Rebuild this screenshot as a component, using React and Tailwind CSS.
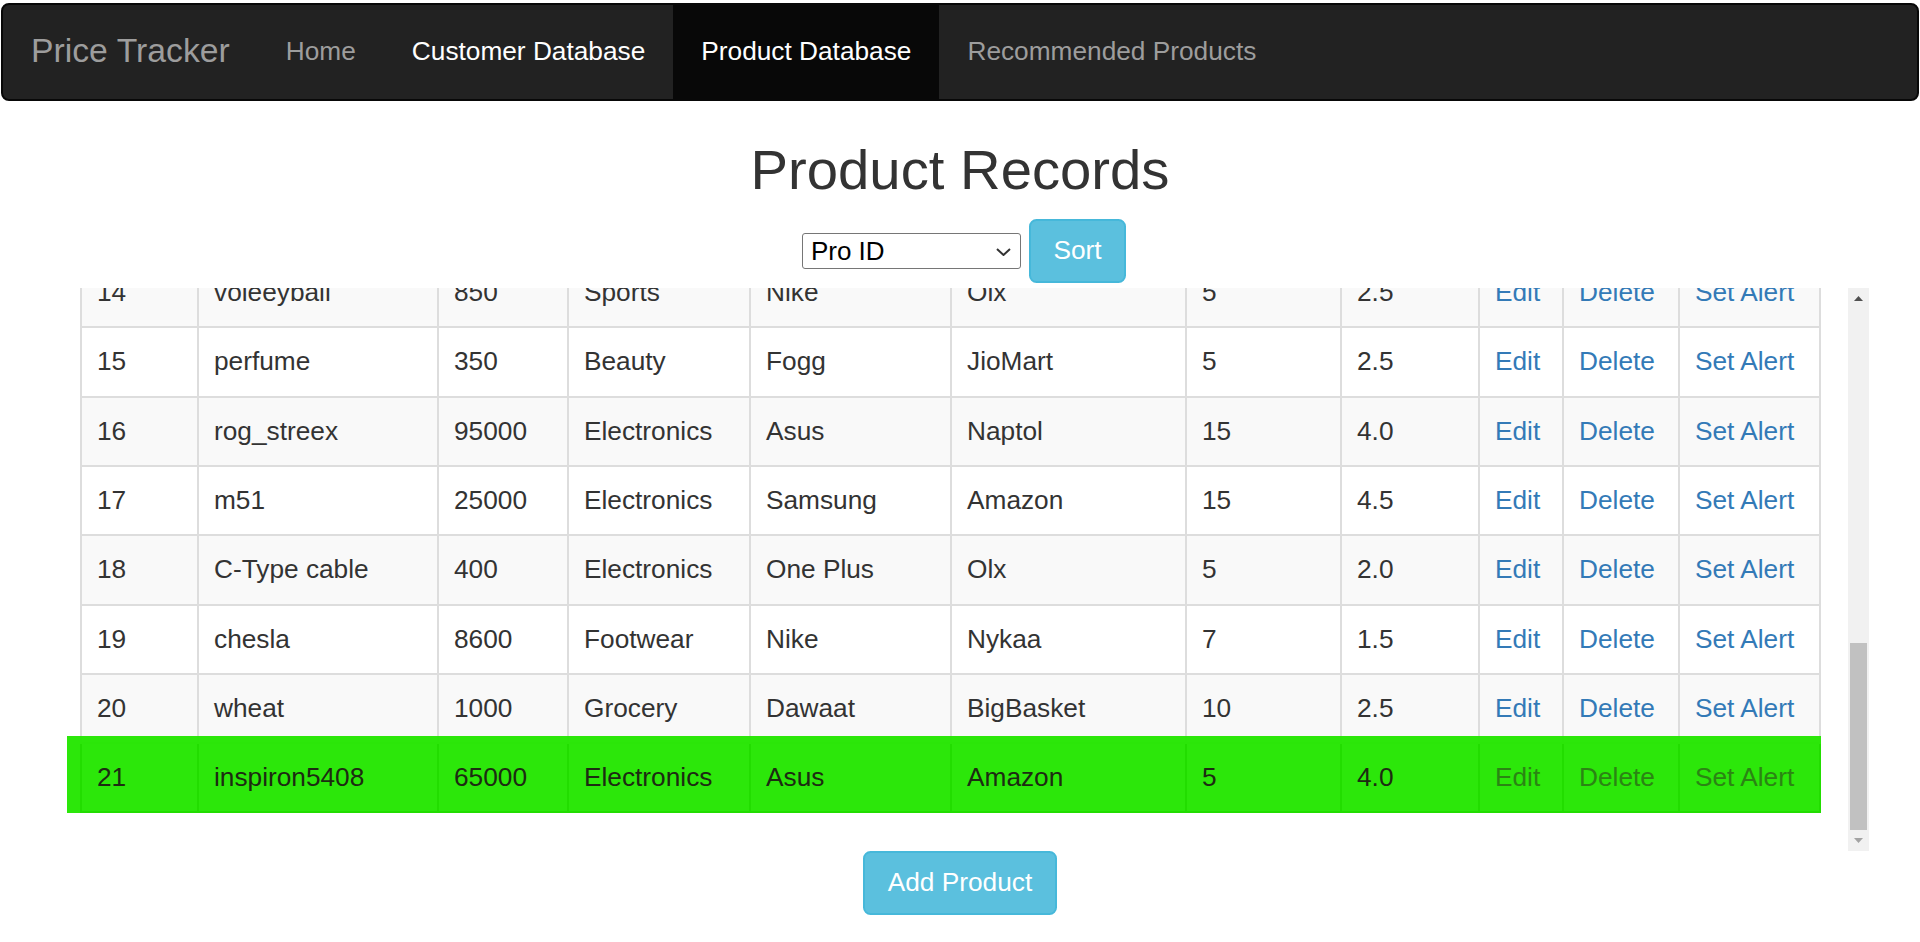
import React from "react";

const rows = [
  { id: 14, name: "voleeyball", price: 850, category: "Sports", brand: "Nike", site: "Olx", qty: 5, rating: "2.5" },
  { id: 15, name: "perfume", price: 350, category: "Beauty", brand: "Fogg", site: "JioMart", qty: 5, rating: "2.5" },
  { id: 16, name: "rog_streex", price: 95000, category: "Electronics", brand: "Asus", site: "Naptol", qty: 15, rating: "4.0" },
  { id: 17, name: "m51", price: 25000, category: "Electronics", brand: "Samsung", site: "Amazon", qty: 15, rating: "4.5" },
  { id: 18, name: "C-Type cable", price: 400, category: "Electronics", brand: "One Plus", site: "Olx", qty: 5, rating: "2.0" },
  { id: 19, name: "chesla", price: 8600, category: "Footwear", brand: "Nike", site: "Nykaa", qty: 7, rating: "1.5" },
  { id: 20, name: "wheat", price: 1000, category: "Grocery", brand: "Dawaat", site: "BigBasket", qty: 10, rating: "2.5" },
  { id: 21, name: "inspiron5408", price: 65000, category: "Electronics", brand: "Asus", site: "Amazon", qty: 5, rating: "4.0" },
];

const headers = ["Pro ID", "Name", "Price", "Category", "Brand", "Website", "Stock", "Rating", "", "", ""];

const gridCols =
  "grid grid-cols-[119px_240px_130px_182px_201px_235px_155px_138px_84px_116px_141px]";

function Navbar() {
  const links = [
    { label: "Home", cls: "text-[#9d9d9d]" },
    { label: "Customer Database", cls: "text-white" },
    { label: "Product Database", cls: "text-white bg-[#080808]" },
    { label: "Recommended Products", cls: "text-[#9d9d9d]" },
  ];
  return (
    <nav className="mx-px mt-[3px] h-[98px] rounded-[8px] border-2 border-[#080808] bg-[#222] flex items-stretch">
      <a className="px-[28px] pb-[3px] flex items-center text-[33.75px] text-[#9d9d9d]">
        Price Tracker
      </a>
      <ul className="flex items-stretch">
        {links.map((l) => (
          <li key={l.label} className={`px-[28px] flex items-center text-[26.25px] ${l.cls}`}>
            {l.label}
          </li>
        ))}
      </ul>
    </nav>
  );
}

function Row({ r }) {
  const hl = r.id === 21;
  const cell = `border-r-2 border-b-2 pl-[15px] pr-[6px] py-[15px] leading-[37.3px] whitespace-nowrap overflow-hidden ${
    hl ? "relative z-10 border-[#22dd00]" : "border-[#ddd]"
  }`;
  const text = hl ? "text-[#1d2b12]" : "text-[#333]";
  const link = hl ? "text-[#2b8414]" : "text-[#337ab7]";
  const bg = hl ? "" : r.id % 2 === 0 ? "bg-[#f9f9f9]" : "bg-white";
  const vals = [r.id, r.name, r.price, r.category, r.brand, r.site, r.qty, r.rating];
  return (
    <div className={`${gridCols} ${bg} ${hl ? "relative" : ""}`}>
      {hl && (
        <div className="absolute top-[-8.6px] left-[-13.3px] right-0 bottom-0 bg-[rgba(35,230,0,0.96)]" />
      )}
      {vals.map((v, i) => (
        <div key={i} className={`${cell} ${text} ${i === 0 ? "border-l-2" : ""}`}>
          {v}
        </div>
      ))}
      <div className={`${cell} ${link}`}>Edit</div>
      <div className={`${cell} ${link}`}>Delete</div>
      <div className={`${cell} ${link}`}>Set Alert</div>
    </div>
  );
}

function Scrollbar() {
  return (
    <div className="w-[21px] bg-[#f1f1f1] flex flex-col">
      <div className="h-[21px] flex items-center justify-center">
        <svg width="9" height="5" viewBox="0 0 9 5">
          <polygon points="0,5 4.5,0 9,5" fill="#505050" />
        </svg>
      </div>
      <div className="flex-1" />
      <div className="h-[187px] mx-[2px] bg-[#c1c1c1]" />
      <div className="h-[21px] flex items-center justify-center">
        <svg width="9" height="5" viewBox="0 0 9 5">
          <polygon points="0,0 9,0 4.5,5" fill="#a3a3a3" />
        </svg>
      </div>
    </div>
  );
}

export default function App() {
  return (
    <div className="min-h-[942px] bg-white text-[#333] font-['Liberation_Sans',Arial,sans-serif]">
      <Navbar />

      <h2 className="mt-[37.5px] text-center text-[56.25px] leading-[61.9px] text-[#333]">
        Product Records
      </h2>

      <div className="mt-[18.75px] h-[63.75px] flex items-center justify-center gap-[8px] pl-[8px]">
        <div className="relative">
          <select className="appearance-none w-[219px] h-[36px] border border-[#767676] rounded-[3px] bg-white pl-[8px] text-[26px] leading-[30px] text-black">
            <option>Pro ID</option>
            <option>Name</option>
            <option>Price</option>
          </select>
          <svg
            className="absolute right-[10px] top-[15px] pointer-events-none"
            width="15"
            height="8"
            viewBox="0 0 15 8"
          >
            <polyline points="1,1 7.5,7 14,1" fill="none" stroke="#333" strokeWidth="2" />
          </svg>
        </div>
        <button className="h-[63.75px] px-[22.5px] rounded-[7.5px] border-2 border-[#46b8da] bg-[#5bc0de] text-white text-[26.25px]">
          Sort
        </button>
      </div>

      <div className="mt-[5px] ml-[66px] w-[1803px] h-[563px] flex">
        <div className="flex-1 overflow-hidden flex flex-col justify-end pl-[14px]">
          <div className="w-[1741px] mb-[37.5px] text-[26.25px]">
            <div className={`${gridCols} border-t-2 border-[#ddd]`}>
              {headers.map((h, i) => (
                <div
                  key={i}
                  className={`border-r-2 border-b-[4px] border-[#ddd] pl-[15px] py-[15px] leading-[37.3px] font-bold ${
                    i === 0 ? "border-l-2" : ""
                  }`}
                >
                  {h}
                </div>
              ))}
            </div>
            {rows.map((r) => (
              <Row key={r.id} r={r} />
            ))}
          </div>
        </div>
        <Scrollbar />
      </div>

      <div className="flex justify-center">
        <button className="h-[63.75px] px-[22.5px] rounded-[7.5px] border-2 border-[#46b8da] bg-[#5bc0de] text-white text-[26.25px]">
          Add Product
        </button>
      </div>
    </div>
  );
}
